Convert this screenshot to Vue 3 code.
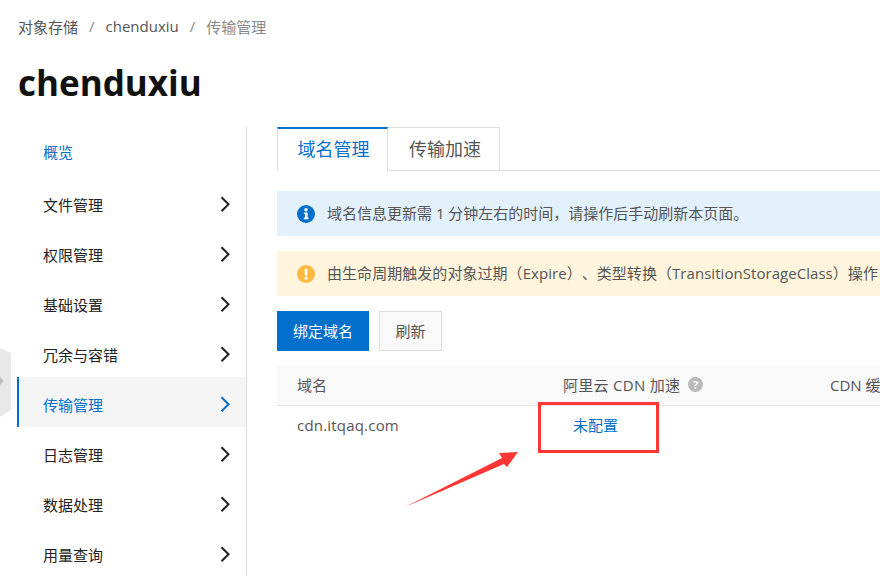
<script setup>
const menu = [
  { label: '概览', first: true },
  { label: '文件管理', arrow: true },
  { label: '权限管理', arrow: true },
  { label: '基础设置', arrow: true },
  { label: '冗余与容错', arrow: true },
  { label: '传输管理', arrow: true, active: true },
  { label: '日志管理', arrow: true },
  { label: '数据处理', arrow: true },
  { label: '用量查询', arrow: true }
]
</script>

<template>
  <div class="page">
    <nav class="crumbs">
      <span>对象存储</span><i>/</i><span>chenduxiu</span><i>/</i><span class="last">传输管理</span>
    </nav>
    <h1>chenduxiu</h1>
    <div class="body">
      <aside class="side">
        <a
          v-for="m in menu"
          :key="m.label"
          class="item"
          :class="{ active: m.active, first: m.first }"
        >
          <span>{{ m.label }}</span>
          <svg v-if="m.arrow" width="10" height="18" viewBox="0 0 10 18" class="chev">
            <path d="M1.5 2.2 L8.5 9.2 L1.5 16.2" fill="none" stroke="currentColor" stroke-width="2" />
          </svg>
        </a>
      </aside>
      <main class="main">
        <div class="tabs">
          <div class="tab on">域名管理</div>
          <div class="tab">传输加速</div>
        </div>
        <div class="alert info">
          <svg width="18" height="18" viewBox="0 0 18 18">
            <circle cx="9" cy="9" r="9" fill="#0070cc" />
            <circle cx="9" cy="4.8" r="1.7" fill="#fff" />
            <path d="M6.8 7.4 H10.6 V12.6 H11.6 V14.2 H6.8 V12.6 H7.9 V9 H6.8 Z" fill="#fff" />
          </svg>
          <span>域名信息更新需 1 分钟左右的时间，请操作后手动刷新本页面。</span>
        </div>
        <div class="alert warn">
          <svg width="18" height="18" viewBox="0 0 18 18">
            <circle cx="9" cy="9" r="9" fill="#ffb840" />
            <rect x="7.7" y="3.4" width="2.6" height="7.4" rx="1" fill="#fff" />
            <circle cx="9" cy="13.2" r="1.6" fill="#fff" />
          </svg>
          <span class="long">由生命周期触发的对象过期（Expire）、类型转换（TransitionStorageClass）操作</span>
        </div>
        <div class="actions">
          <button class="btn primary">绑定域名</button>
          <button class="btn plain">刷新</button>
        </div>
        <div class="table">
          <div class="row head">
            <div class="c1">域名</div>
            <div class="c2">
              <span class="wide">阿里云 CDN 加速</span>
              <svg width="15" height="15" viewBox="0 0 15 15" class="help">
                <circle cx="7.5" cy="7.5" r="7.5" fill="#b9b9b9" />
                <text x="7.5" y="11.6" text-anchor="middle" class="q">?</text>
              </svg>
            </div>
            <div class="c3">CDN 缓</div>
          </div>
          <div class="row cell">
            <div class="c1 url">cdn.itqaq.com</div>
            <div class="c2 link">未配置</div>
            <div class="c3"></div>
          </div>
        </div>
      </main>
    </div>
    <div class="handle">
      <svg width="12" height="69" viewBox="0 0 12 69">
        <path d="M0 0 L11 5 V62 L0 69 Z" fill="#e8e8e8" />
        <path d="M0 29 L3.5 33 L0 37 Z" fill="#bdbdbd" />
      </svg>
    </div>
    <div class="mark"></div>
    <svg class="pointer" width="130" height="70" viewBox="0 0 130 70">
      <path d="M5 62 L102 13 L99 8 L118 7 L107 22 L104 19 Z" fill="#ff3636" />
    </svg>
  </div>
</template>

<style>
html, body { margin: 0; background: #fff; overflow: hidden; }
</style>

<style scoped>
.page {
  position: relative;
  width: 880px;
  height: 576px;
  overflow: hidden;
  background: #fff;
  font-family: "Open Sans", "Noto Sans CJK SC", sans-serif;
  font-size: 15px;
  color: #333;
  text-spacing-trim: space-all;
}
.crumbs {
  display: flex;
  align-items: center;
  gap: 11px;
  height: 20px;
  padding: 16px 0 0 18px;
  color: #555;
}
.crumbs i { font-style: normal; color: #888; }
.crumbs .last { color: #888; }
h1 {
  margin: 0;
  padding: 23px 0 0 18px;
  font-size: 35px;
  line-height: 48px;
  font-weight: 700;
  color: #111;
}
.body {
  display: flex;
  margin-top: 20px;
  padding-left: 17px;
}
.side {
  width: 229px;
  flex: none;
  border-right: 1px solid #ddd;
  min-height: 460px;
}
.item {
  display: flex;
  justify-content: space-between;
  align-items: center;
  box-sizing: border-box;
  height: 50px;
  padding: 4px 16px 0 24px;
  color: #222;
  border-left: 2px solid transparent;
}
.item.first { color: #0070cc; padding-top: 0; padding-bottom: 2px; }
.item.active {
  color: #0070cc;
  background: #f5f5f6;
  border-left-color: #0070cc;
}
.chev { color: #222; }
.item.active .chev { color: #0070cc; }
.main {
  flex: none;
  width: 640px;
  margin-left: 30px;
}
.tabs {
  display: flex;
  height: 44px;
  box-sizing: border-box;
  border-bottom: 1px solid #ddd;
}
.tab {
  box-sizing: border-box;
  width: 112px;
  height: 44px;
  padding-left: 3px;
  border: 1px solid #ddd;
  border-left: 0;
  text-align: center;
  line-height: 43px;
  font-size: 18px;
  color: #555;
}
.tab.on {
  width: 111px;
  padding-left: 2px;
  color: #0070cc;
  border-top: 2px solid #0070cc;
  border-left: 1px solid #ddd;
  border-bottom-color: #fff;
  border-right: 1px solid #ddd;
  line-height: 41px;
}
.alert {
  display: flex;
  align-items: center;
  gap: 12px;
  height: 45px;
  padding-left: 20px;
  white-space: nowrap;
  color: #555;
}
.alert span { margin-top: -2px; }
.alert .long { letter-spacing: 0.05px; }
.info { margin-top: 20px; background: #e3f1fd; }
.warn { margin-top: 15px; background: #fff5dc; }
.actions {
  display: flex;
  gap: 10px;
  margin-top: 15px;
}
.btn {
  box-sizing: border-box;
  height: 40px;
  padding: 0 0 2px;
  border: 1px solid #ddd;
  background: #f9f9f9;
  color: #555;
  font: inherit;
}
.btn.plain { width: 63px; }
.btn.primary {
  width: 92px;
  border-color: #0070cc;
  background: #0070cc;
  color: #fff;
}
.table { margin-top: 15px; }
.row {
  display: grid;
  grid-template-columns: 266px 267px 1fr;
  padding-left: 20px;
  white-space: nowrap;
}
.head {
  height: 40px;
  box-sizing: border-box;
  align-items: center;
  background: #f9f9f9;
  border-bottom: 1px solid #e5e5e5;
  color: #555;
}
.head > div { margin-top: -2px; }
.cell {
  padding-top: 8px;
  color: #555;
}
.url { letter-spacing: 0.2px; margin-top: 1px; }
.c2 { display: flex; align-items: center; gap: 8px; }
.wide { letter-spacing: 0.3px; }
.cell .link { color: #0070cc; padding-left: 10px; }
.q { font-size: 11px; font-weight: 700; fill: #fff; }
.handle {
  position: absolute;
  left: 0;
  top: 348px;
  line-height: 0;
}
.mark {
  position: absolute;
  left: 538px;
  top: 402px;
  width: 121px;
  height: 51px;
  box-sizing: border-box;
  border: 3px solid #ff3636;
}
.pointer {
  position: absolute;
  left: 400px;
  top: 445px;
}
</style>
